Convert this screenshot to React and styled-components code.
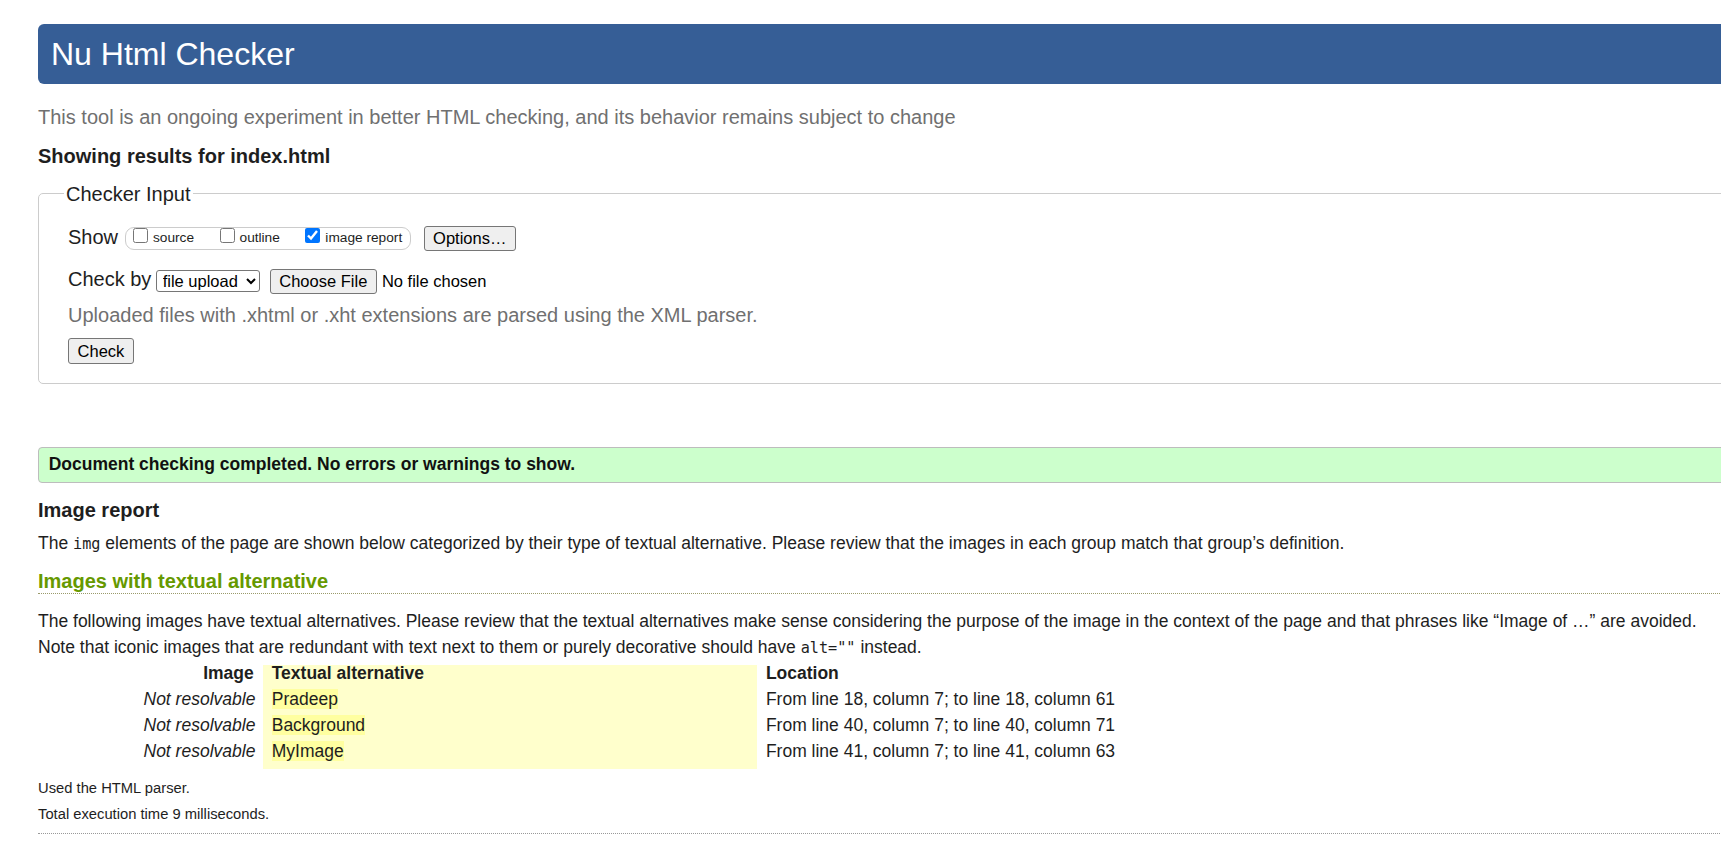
import React from 'react';
import styled, { createGlobalStyle } from 'styled-components';

const GlobalStyle = createGlobalStyle`
  html, body { margin: 0; padding: 0; overflow: hidden; background: #fff; }
  body { font-family: "Liberation Sans", Arial, sans-serif; color: #1e1e1e; }
`;

const Page = styled.div`
  width: 1760px;
  padding: 24px 0 0 38px;
`;

const Header = styled.header`
  height: 60px;
  background: #365e96;
  border-radius: 6px;
  padding-left: 13px;
`;

const Title = styled.h1`
  margin: 0;
  font-size: 32px;
  font-weight: normal;
  line-height: 60px;
  color: #fff;
`;

const Text = styled.p`
  margin: ${(p) => p.$mt || 0}px 0 0;
  font-size: ${(p) => p.$size || 20}px;
  line-height: ${(p) => p.$lh || 24}px;
  font-weight: ${(p) => (p.$bold ? 'bold' : 'normal')};
  color: ${(p) => (p.$muted ? '#707070' : '#1e1e1e')};
`;

const Fieldset = styled.fieldset`
  margin: 13.6px 0 0;
  padding: 20px 0 18.7px 29px;
  border: 1px solid #cccccc;
  border-radius: 5px;
  min-width: 0;
`;

const Legend = styled.legend`
  margin-left: -4px;
  padding: 0 2px;
  font-size: 20px;
  line-height: 24px;
  color: #1e1e1e;
`;

const Row = styled.div`
  display: flex;
  align-items: center;
  height: ${(p) => p.$h}px;
  margin-top: ${(p) => p.$mt || 0}px;
`;

const RowLabel = styled.span`
  font-size: 20px;
  line-height: 24px;
  padding-bottom: 3.6px;
  margin-right: ${(p) => p.$mr}px;
`;

const CheckGroup = styled.div`
  display: flex;
  align-items: flex-end;
  gap: 25.5px;
  box-sizing: border-box;
  height: 23.4px;
  padding: 0 7.3px 3.15px 7px;
  border: 1px solid #cccccc;
  border-radius: 9px;
`;

const CheckLabel = styled.label`
  display: flex;
  align-items: flex-end;
  font-size: 13.7px;
  line-height: 16px;
  color: #1e1e1e;
`;

const Checkbox = styled.input`
  width: 15px;
  height: 15px;
  margin: 0 5px 3.25px 0;
`;

const Button = styled.button`
  box-sizing: border-box;
  height: ${(p) => p.$h || 25.6}px;
  margin-left: ${(p) => p.$ml || 0}px;
  padding: 0 8.6px;
  font-family: "Liberation Sans", Arial, sans-serif;
  font-size: 16.5px;
  line-height: 19px;
  color: #000;
  background: #efefef;
  border: 1px solid #767676;
  border-radius: 3px;
`;

const Select = styled.select`
  box-sizing: border-box;
  width: 104px;
  height: 22px;
  padding: 0 0 0 2px;
  font-family: "Liberation Sans", Arial, sans-serif;
  font-size: 16.5px;
  color: #000;
  background: #fff;
  border: 1px solid #767676;
  border-radius: 3px;
`;

const FileStatus = styled.span`
  margin-left: 5px;
  font-size: 16.5px;
  line-height: 19px;
  color: #000;
`;

const Success = styled.div`
  margin-top: 63.3px;
  padding: 5.8px 10px 7.2px 9.7px;
  font-size: 17.5px;
  line-height: 21px;
  font-weight: bold;
  color: #111;
  background: #ccffcc;
  border: 1px solid #bdbdbd;
  border-radius: 4px;
`;

const SectionTitle = styled.h2`
  margin: ${(p) => p.$mt}px 0 0;
  font-size: 20px;
  line-height: 24px;
  font-weight: bold;
  color: ${(p) => (p.$green ? '#669900' : '#1e1e1e')};
  border-bottom: ${(p) => (p.$green ? '1px dotted #9a9a6a' : '0')};
`;

const Code = styled.code`
  font-family: "DejaVu Sans Mono", "Liberation Mono", monospace;
  font-size: 15.2px;
  line-height: 1;
`;

const Table = styled.table`
  margin: 5.8px 0 0 96.5px;
  border-collapse: collapse;
  border-spacing: 0;
  table-layout: fixed;
  width: 1023px;
  font-size: 17.5px;
`;

const colWidths = { image: '128.2px', alt: '494.6px', location: '400px' };

const HeadCell = styled.th`
  box-sizing: border-box;
  width: ${(p) => colWidths[p.$col]};
  padding: 0 9px 5px ${(p) => (p.$col === 'location' ? 8.5 : 9)}px;
  line-height: 16px;
  vertical-align: top;
  font-weight: bold;
  text-align: ${(p) => (p.$col === 'image' ? 'right' : 'left')};
  color: #1e1e1e;
  background: ${(p) => (p.$col === 'alt' ? '#ffffcc' : 'transparent')};
`;

const Cell = styled.td`
  box-sizing: border-box;
  padding: 2.5px 9px ${(p) => (p.$last ? 7.5 : 2.5)}px ${(p) => (p.$col === 'location' ? 8.5 : 9)}px;
  line-height: 21px;
  vertical-align: top;
  white-space: nowrap;
  font-style: ${(p) => (p.$col === 'image' ? 'italic' : 'normal')};
  text-align: ${(p) => (p.$col === 'image' ? 'right' : 'left')};
  color: #1e1e1e;
  background: ${(p) => (p.$col === 'alt' ? '#ffffcc' : 'transparent')};
`;

const AltText = styled.span`
  background: #ffffa0;
`;

const Note = styled.p`
  margin: ${(p) => p.$mt}px 0 0;
  font-size: 14.75px;
  line-height: 20px;
  color: #1e1e1e;
`;

const Divider = styled.hr`
  margin: 8.4px 0 0;
  border: 0;
  border-top: 1px dotted #999;
`;

const rows = [
  { alt: 'Pradeep', loc: 'From line 18, column 7; to line 18, column 61' },
  { alt: 'Background', loc: 'From line 40, column 7; to line 40, column 71' },
  { alt: 'MyImage', loc: 'From line 41, column 7; to line 41, column 63' },
];

export default function App() {
  return (
    <>
      <GlobalStyle />
      <Page>
        <Header>
          <Title>Nu Html Checker</Title>
        </Header>
        <Text $mt={21} $muted>
          This tool is an ongoing experiment in better HTML checking, and its behavior remains subject to change
        </Text>
        <Text $mt={15} $bold>Showing results for index.html</Text>

        <Fieldset>
          <Legend>Checker Input</Legend>
          <Row $h={25.7}>
            <RowLabel $mr={6.9}>Show</RowLabel>
            <CheckGroup>
              <CheckLabel>
                <Checkbox type="checkbox" />
                source
              </CheckLabel>
              <CheckLabel>
                <Checkbox type="checkbox" />
                outline
              </CheckLabel>
              <CheckLabel>
                <Checkbox type="checkbox" defaultChecked />
                image report
              </CheckLabel>
            </CheckGroup>
            <Button $ml={13} $h={25.7}>Options…</Button>
          </Row>
          <Row $h={25.3} $mt={17.3}>
            <RowLabel $mr={4.3}>Check by</RowLabel>
            <Select defaultValue="file">
              <option value="file">file upload</option>
              <option value="address">address</option>
              <option value="text">text input</option>
            </Select>
            <Button $ml={10} $h={25.3}>Choose File</Button>
            <FileStatus>No file chosen</FileStatus>
          </Row>
          <Text $mt={9.5} $muted>Uploaded files with .xhtml or .xht extensions are parsed using the XML parser.</Text>
          <Row $h={25.6} $mt={10.9}>
            <Button>Check</Button>
          </Row>
        </Fieldset>

        <Success>Document checking completed. No errors or warnings to show.</Success>

        <SectionTitle $mt={15}>Image report</SectionTitle>
        <Text $mt={8.6} $size={17.5} $lh={26}>
          The <Code>img</Code> elements of the page are shown below categorized by their type of textual alternative. Please review that the images in each group match that group’s definition.
        </Text>

        <SectionTitle $mt={12.6} $green>Images with textual alternative</SectionTitle>
        <Text $mt={13.6} $size={17.5} $lh={26}>
          The following images have textual alternatives. Please review that the textual alternatives make sense considering the purpose of the image in the context of the page and that phrases like “Image of …” are avoided.
          <br />
          Note that iconic images that are redundant with text next to them or purely decorative should have <Code>alt=""</Code> instead.
        </Text>

        <Table>
          <thead>
            <tr>
              <HeadCell $col="image">Image</HeadCell>
              <HeadCell $col="alt">Textual alternative</HeadCell>
              <HeadCell $col="location">Location</HeadCell>
            </tr>
          </thead>
          <tbody>
            {rows.map((r, i) => {
              const last = i === rows.length - 1;
              return (
                <tr key={r.alt}>
                  <Cell $col="image" $last={last}>Not resolvable</Cell>
                  <Cell $col="alt" $last={last}><AltText>{r.alt}</AltText></Cell>
                  <Cell $col="location" $last={last}>{r.loc}</Cell>
                </tr>
              );
            })}
          </tbody>
        </Table>

        <Note $mt={8.9}>Used the HTML parser.</Note>
        <Note $mt={6}>Total execution time 9 milliseconds.</Note>
        <Divider />
      </Page>
    </>
  );
}
